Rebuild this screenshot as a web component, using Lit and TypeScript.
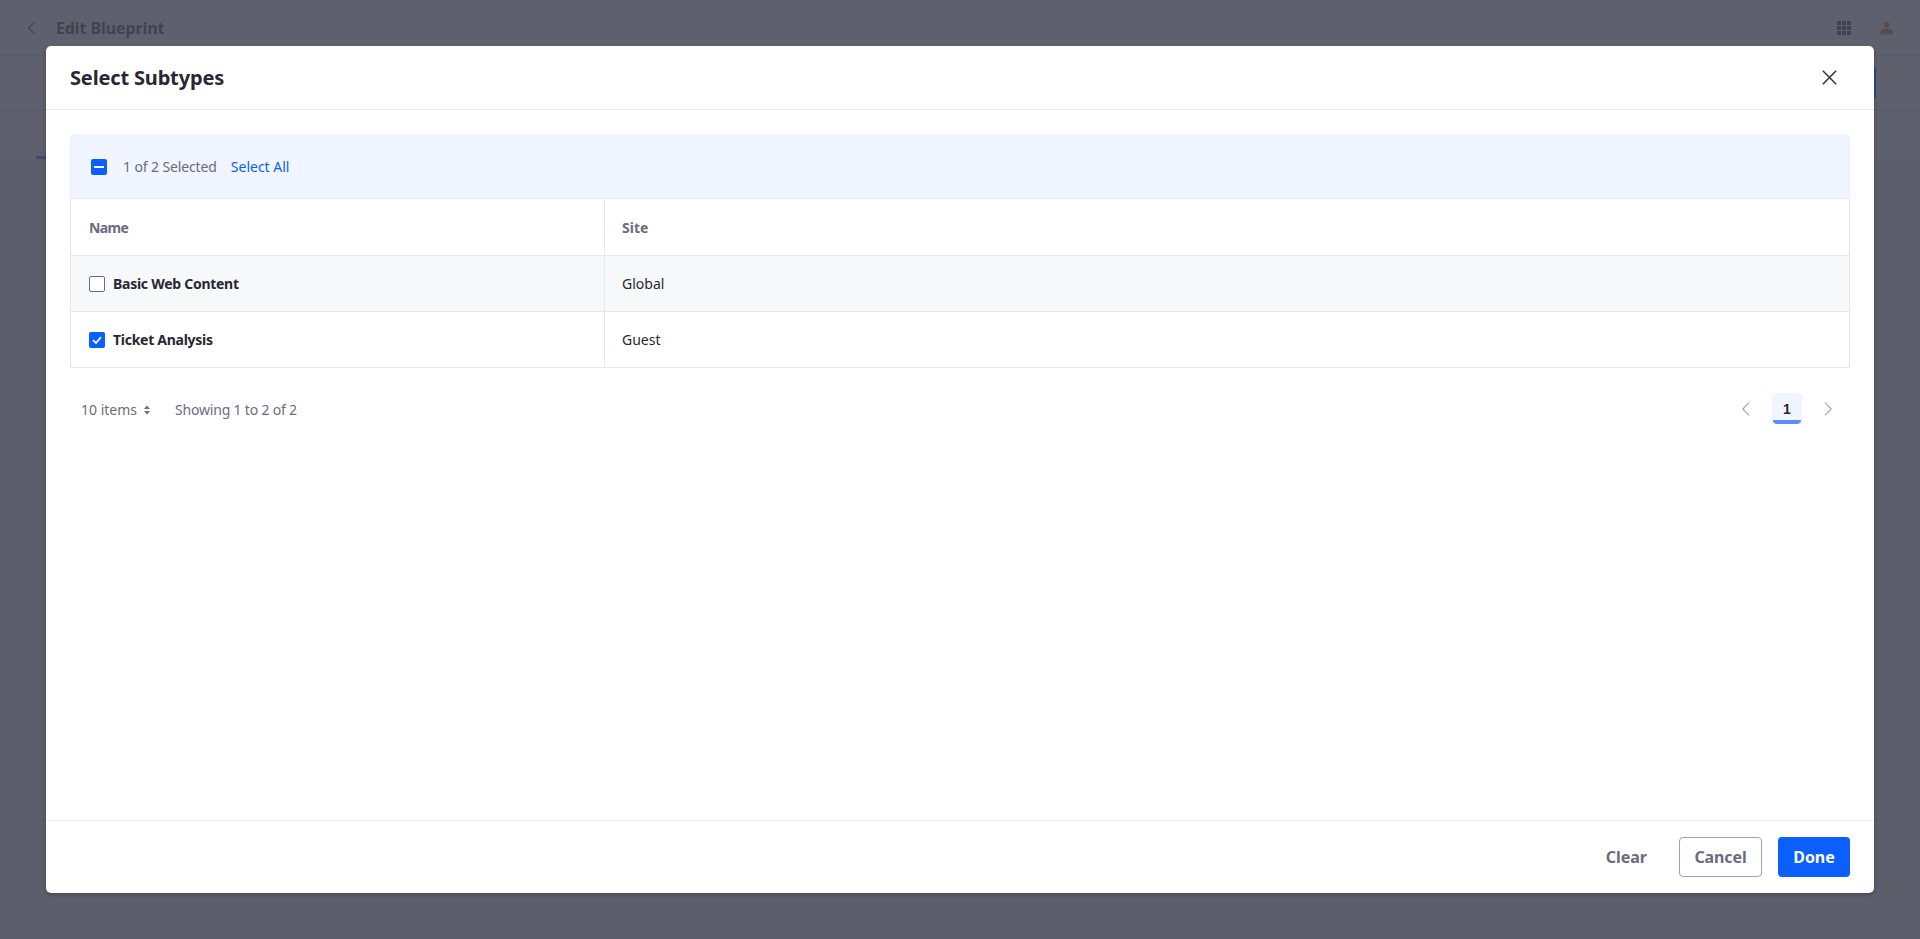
import { LitElement, html, css, svg } from "lit";
import { customElement } from "lit/decorators.js";

const chevron = (left: boolean) => svg`<svg class="chev" viewBox="0 0 16 16" width="16" height="16"><path d=${left ? "M11 1.7 4.8 8l6.2 6.3" : "M5 1.7 11.2 8 5 14.3"} fill="none" stroke="currentColor" stroke-width="1.2"/></svg>`;

@customElement("app-root")
export class AppRoot extends LitElement {
  static styles = css`
    :host { display: block; position: relative; width: 1920px; height: 939px; overflow: hidden; background: #fff;
      font-family: "Noto Sans", "Open Sans", sans-serif; color: #272833; font-size: 14px; }
    * { box-sizing: border-box; }
    .chev { display: block; }
    .page { height: 939px; display: flex; flex-direction: column; background: #f7f8f9; }
    .topbar { height: 56px; background: #fff; border-bottom: 1px solid #e7e7ed; display: flex; align-items: center; padding: 0 17px 0 24px; color: #88888c; }
    .topbar .title { font-size: 16px; font-weight: 700; margin-left: 16px; padding-top: 1px; letter-spacing: -0.1px; }
    .spacer { flex: 1; }
    .apps { display: grid; grid-template-columns: repeat(3, 4px); gap: 1px; margin-right: 18px; }
    .apps i { width: 4px; height: 4px; background: #88888c; }
    .avatar { width: 34px; height: 34px; display: flex; align-items: center; justify-content: center; border: 1px solid #f0f0f4; border-radius: 50%; }
    .sub { height: 55px; background: #fff; border-bottom: 1px solid #e7e7ed; }
    .tabs { height: 49px; padding-left: 36px; display: flex; align-items: flex-end; background: #fff; border-bottom: 1px solid #f1f1f4; }
    .tabs b { display: block; width: 60px; height: 3px; background: #80b4ff; }
    .backdrop { position: absolute; inset: 0; background: rgba(42, 43, 60, 0.75); }
    .peek { position: absolute; left: 1874px; top: 67px; width: 2px; height: 32px; background: #2e4a8a; border-radius: 0 2px 2px 0; }
    .modal { position: absolute; left: 46px; top: 46px; width: 1828px; height: 847px; background: #fff; border-radius: 5px;
      box-shadow: 0 2px 4px rgba(0, 0, 0, .22); display: flex; flex-direction: column; }
    .mhead { height: 64px; border-bottom: 1px solid #e7e7ed; display: flex; align-items: center; justify-content: space-between; padding: 0 24px; }
    .mhead h1 { margin: 0; font-size: 20px; line-height: 24px; font-weight: 700; color: #272833; letter-spacing: -0.16px; }
    .close { color: #32333f; display: flex; margin-right: 13px; }
    .mbody { flex: 1; padding: 24px; min-height: 0; }
    .tools { height: 65px; background: #f0f5ff; border: 1px solid #edf1fa; border-bottom-color: #e7e7ed; border-radius: 4px 4px 0 0; display: flex; align-items: center; padding: 0 20px; }
    .cbx { width: 16px; height: 16px; border-radius: 2px; display: flex; align-items: center; justify-content: center; flex: none; }
    .cbx.on { background: #0b5fff; }
    .cbx.off { background: #fff; border: 1px solid #6b6c7e; }
    .count { margin-left: 16px; color: #6b6c7e; letter-spacing: -0.12px; }
    .all { margin-left: 14px; color: #0b5fff; }
    .row { display: grid; grid-template-columns: 533px 1fr; height: 56px; border: 1px solid #e7e7ed; border-top: 0; }
    .row.hd { height: 57px; }
    .row.hl { background: #f7f8f9; }
    .cell { display: flex; align-items: center; padding: 0 18px; }
    .cell + .cell { border-left: 1px solid #e7e7ed; padding-left: 17px; }
    .hd .cell { color: #6b6c7e; font-weight: 700; }
    .hd .cell:first-child { letter-spacing: -0.6px; }
    .name { margin-left: 8px; font-weight: 700; color: #272833; letter-spacing: -0.27px; }
    .pager { display: flex; align-items: center; justify-content: space-between; margin-top: 25px; height: 31px; color: #6b6c7e; padding-left: 11px; }
    .left, .right { display: flex; align-items: center; }
    .left { padding-top: 2px; }
    .items { display: flex; align-items: center; gap: 6px; margin-right: 24px; }
    .showing { letter-spacing: -0.19px; }
    .right { color: #a7a9bc; gap: 18px; padding-right: 14px; }
    .pg { width: 30px; height: 31px; background: #f0f5ff; border-radius: 4px; overflow: hidden; position: relative; display: flex; align-items: center; justify-content: center; color: #272833; font-weight: 700; font-family: "Liberation Sans", sans-serif; }
    .pg::after { content: ""; position: absolute; left: 1px; right: 1px; bottom: 0; height: 4px; background: #5a8dff; border-radius: 0 0 4px 4px; }
    .mfoot { height: 73px; border-top: 1px solid #e7e7ed; display: flex; align-items: center; justify-content: flex-end; padding: 0 24px; gap: 16px; }
    .btn { height: 40px; border-radius: 4px; font-size: 16px; font-weight: 700; display: flex; align-items: center; justify-content: center; }
    .clear { color: #6b6c7e; padding: 0 16px; }
    .cancel { color: #6b6c7e; border: 1px solid #a79fb0; width: 83px; letter-spacing: -0.1px; }
    .done { color: #fff; background: #0b5fff; width: 72px; letter-spacing: -0.1px; }
  `;

  render() {
    return html`
      <div class="page">
        <div class="topbar">
          <span>${chevron(true)}</span>
          <span class="title">Edit Blueprint</span>
          <span class="spacer"></span>
          <span class="apps">${Array.from({ length: 9 }, () => html`<i></i>`)}</span>
          <span class="avatar"><svg width="13" height="14" viewBox="0 0 14 14"><circle cx="7" cy="3.400" r="3" fill="#e8a878"/><path d="M1.200 14C.5 14 0 13.500 0 12.800 0 9.800 3 7.500 7 7.500s7 2.300 7 5.300c0 .7-.5 1.200-1.200 1.200z" fill="#e8a878"/></svg></span>
        </div>
        <div class="sub"></div>
        <div class="tabs"><b></b></div>
      </div>
      <div class="backdrop"></div>
      <div class="peek"></div>
      <div class="modal">
        <div class="mhead">
          <h1>Select Subtypes</h1>
          <span class="close"><svg width="15" height="15" viewBox="0 0 15 15"><path d="M.8.8l13.400 13.400M14.200.8.800 14.200" stroke="currentColor" stroke-width="1.5" fill="none"/></svg></span>
        </div>
        <div class="mbody">
          <div class="tools">
            <span class="cbx on"><svg width="10" height="10" viewBox="0 0 10 10"><rect x="0" y="4" width="10" height="2" fill="#fff"/></svg></span>
            <span class="count">1 of 2 Selected</span>
            <span class="all">Select All</span>
          </div>
          <div class="row hd"><div class="cell">Name</div><div class="cell">Site</div></div>
          <div class="row hl">
            <div class="cell"><span class="cbx off"></span><span class="name">Basic Web Content</span></div>
            <div class="cell">Global</div>
          </div>
          <div class="row">
            <div class="cell"><span class="cbx on"><svg width="12" height="12" viewBox="0 0 12 12"><path d="M2 6.200 5 9l5-6" fill="none" stroke="#fff" stroke-width="1.8"/></svg></span><span class="name">Ticket Analysis</span></div>
            <div class="cell">Guest</div>
          </div>
          <div class="pager">
            <div class="left">
              <span class="items">10 items <svg width="8" height="12" viewBox="0 0 8 12"><path d="M4 1.500 7 5H1zM4 10.500 1 7h6z" fill="currentColor"/></svg></span>
              <span class="showing">Showing 1 to 2 of 2</span>
            </div>
            <div class="right">${chevron(true)}<span class="pg">1</span>${chevron(false)}</div>
          </div>
        </div>
        <div class="mfoot">
          <span class="btn clear">Clear</span>
          <span class="btn cancel">Cancel</span>
          <span class="btn done">Done</span>
        </div>
      </div>
    `;
  }
}
